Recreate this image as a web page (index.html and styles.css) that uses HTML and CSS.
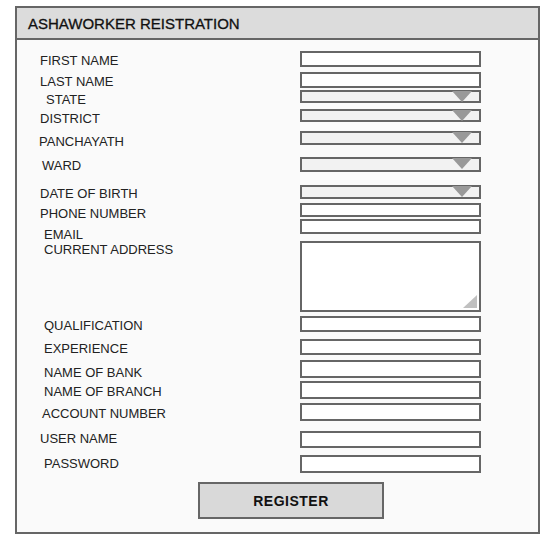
FILE: index.html
```html
<!DOCTYPE html>
<html lang="en">
<head>
    <meta charset="UTF-8">
    <meta name="viewport" content="width=device-width, initial-scale=1.0">
    <title>Ashaworker Registration</title>
    <link rel="stylesheet" href="styles.css">
</head>
<body>
    <div class="panel">
        <div class="panel-head">ASHAWORKER REISTRATION</div>
        <form class="reg-form">
            <div class="row">
                <label class="lbl" for="first-name">FIRST NAME</label>
                <input type="text" id="first-name" class="field h16">
            </div>
            <div class="row mt5">
                <label class="lbl" for="last-name">LAST NAME</label>
                <input type="text" id="last-name" class="field h16">
            </div>
            <div class="row mt2">
                <label class="lbl in6 low" for="state">STATE</label>
                <span class="pick h13"><select id="state" class="field"></select></span>
            </div>
            <div class="row mt6">
                <label class="lbl low" for="district">DISTRICT</label>
                <span class="pick h13"><select id="district" class="field"></select></span>
            </div>
            <div class="row mt9">
                <label class="lbl out1 low" for="panchayath">PANCHAYATH</label>
                <span class="pick h14"><select id="panchayath" class="field"></select></span>
            </div>
            <div class="row mt12">
                <label class="lbl in2" for="ward">WARD</label>
                <span class="pick h15"><select id="ward" class="field"></select></span>
            </div>
            <div class="row mt13">
                <label class="lbl" for="dob">DATE OF BIRTH</label>
                <span class="pick h14"><select id="dob" class="field"></select></span>
            </div>
            <div class="row mt4">
                <label class="lbl low" for="phone">PHONE NUMBER</label>
                <input type="text" id="phone" class="field h14">
            </div>
            <div class="row mt2">
                <label class="lbl in4 drop" for="email">EMAIL</label>
                <input type="text" id="email" class="field h15">
            </div>
            <div class="row mt7">
                <label class="lbl in4 top" for="address">CURRENT ADDRESS</label>
                <span class="memo"><textarea id="address" class="field h71"></textarea></span>
            </div>
            <div class="row mt4">
                <label class="lbl in4" for="qualification">QUALIFICATION</label>
                <input type="text" id="qualification" class="field h16">
            </div>
            <div class="row mt7">
                <label class="lbl in4" for="experience">EXPERIENCE</label>
                <input type="text" id="experience" class="field h16">
            </div>
            <div class="row mt5">
                <label class="lbl in4 low" for="bank">NAME OF BANK</label>
                <input type="text" id="bank" class="field h18">
            </div>
            <div class="row mt3">
                <label class="lbl in4" for="branch">NAME OF BRANCH</label>
                <input type="text" id="branch" class="field h18">
            </div>
            <div class="row mt4">
                <label class="lbl in2" for="account">ACCOUNT NUMBER</label>
                <input type="text" id="account" class="field h18">
            </div>
            <div class="row mt10">
                <label class="lbl high" for="username">USER NAME</label>
                <input type="text" id="username" class="field h17">
            </div>
            <div class="row mt7">
                <label class="lbl in4 high" for="password">PASSWORD</label>
                <input type="password" id="password" class="field h18">
            </div>
            <button type="submit" class="reg-btn">REGISTER</button>
        </form>
    </div>
</body>
</html>
```

FILE: styles.css
```css
body {
    margin: 0;
    background-color: #fff;
    font-family: "Liberation Sans", Arial, sans-serif;
}
.panel {
    box-sizing: border-box;
    width: 525px;
    height: 528px;
    margin: 6px 0 0 15px;
    border: 2px solid #666;
    background-color: #fafafa;
}
.panel-head {
    box-sizing: border-box;
    height: 32px;
    display: flex;
    align-items: center;
    padding-left: 11px;
    background-color: #dcdcdc;
    border-bottom: 2px solid #666;
    font-size: 15px;
    color: #111;
    -webkit-text-stroke: 0.3px #111;
}
.reg-form {
    padding: 11px 0 0 23px;
}
.row {
    display: grid;
    grid-template-columns: 260px 181px;
    align-items: center;
}
.lbl {
    font-size: 13px;
    line-height: 11px;
    padding-top: 2px;
    color: #222;
    white-space: nowrap;
}
/* small nudges, the labels in the mockup are not lined up */
.lbl.in2 { margin-left: 2px; }
.lbl.in4 { margin-left: 4px; }
.lbl.in6 { margin-left: 6px; }
.lbl.out1 { margin-left: -1px; }
.lbl.low {
    padding-top: 4px;
    margin-bottom: -2px;
}
.lbl.high {
    padding-top: 0;
    margin-bottom: 2px;
}
.lbl.drop {
    margin-top: 7px;
    margin-bottom: -7px;
}
.lbl.top {
    align-self: start;
    padding-top: 3px;
}

.mt2 { margin-top: 2px; }
.mt3 { margin-top: 3px; }
.mt4 { margin-top: 4px; }
.mt5 { margin-top: 5px; }
.mt6 { margin-top: 6px; }
.mt7 { margin-top: 7px; }
.mt9 { margin-top: 9px; }
.mt10 { margin-top: 10px; }
.mt12 { margin-top: 12px; }
.mt13 { margin-top: 13px; }

.field {
    display: block;
    box-sizing: border-box;
    width: 181px;
    margin: 0;
    padding: 0;
    border: 2px solid #666;
    border-radius: 0;
    background-color: #fff;
    outline: none;
}
.h13 { height: 13px; }
.h14 { height: 14px; }
.h15 { height: 15px; }
.h16 { height: 16px; }
.h17 { height: 17px; }
.h18 { height: 18px; }
.h71 { height: 71px; }

.pick {
    position: relative;
    display: block;
    width: 181px;
}
.pick select {
    height: 100%;
    -webkit-appearance: none;
    appearance: none;
    background-color: #f2f2f2;
}
.pick::after {
    content: "";
    position: absolute;
    top: 1px;
    right: 9px;
    border-left: 10px solid transparent;
    border-right: 10px solid transparent;
    border-top: 11px solid #999;
}
.memo {
    position: relative;
    display: block;
    width: 181px;
}
.memo textarea {
    resize: none;
}
.memo::after {
    content: "";
    position: absolute;
    right: 4px;
    bottom: 4px;
    border-left: 14px solid transparent;
    border-bottom: 13px solid #c0c0c0;
}
.reg-btn {
    display: block;
    box-sizing: border-box;
    width: 186px;
    height: 37px;
    margin: 9px 0 0 158px;
    border: 2px solid #666;
    background-color: #d9d9d9;
    font-family: "Liberation Sans", Arial, sans-serif;
    font-size: 14px;
    font-weight: bold;
    letter-spacing: 0.5px;
    color: #111;
    cursor: pointer;
}
```
